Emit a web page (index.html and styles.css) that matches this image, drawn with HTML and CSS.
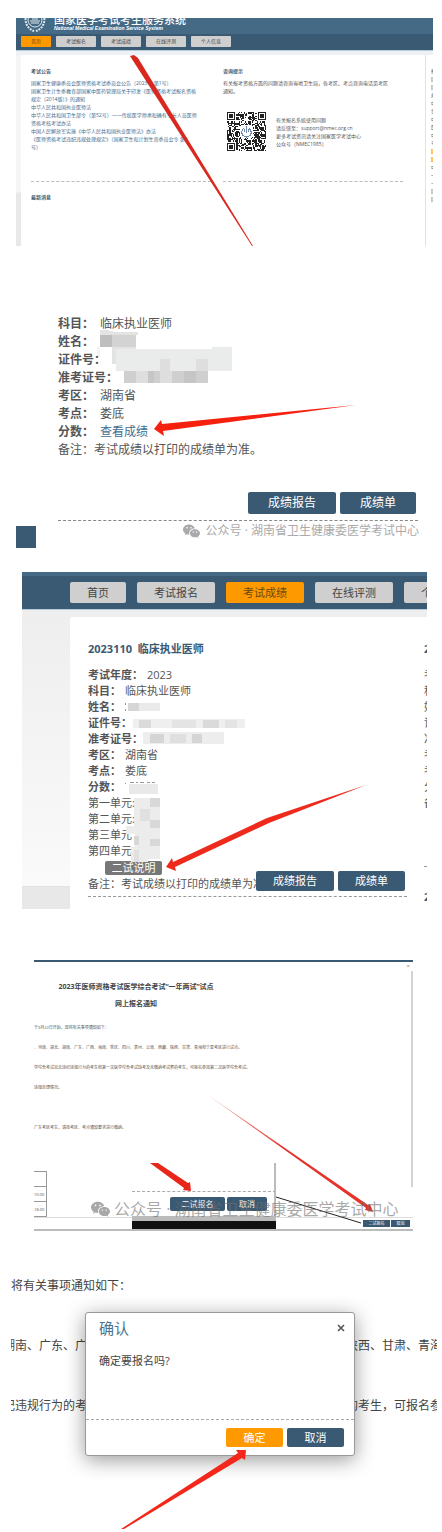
FILE: index.html
```html
<!DOCTYPE html>
<html lang="zh-CN">
<head>
  <meta charset="UTF-8">
  <title>国家医学考试考生服务系统</title>
  <meta name="viewport" content="width=device-width, initial-scale=1.0">
  <link rel="stylesheet" href="styles.css">
</head>

<body>
  <svg class="defs" width="0" height="0">
    <symbol id="wechat" viewBox="0 0 34 28">
      <path fill="currentColor" d="M12 1C5.400 1 0 5.500 0 11c0 3.200 1.800 6 4.600 7.900L3.500 22.500l4.200-2.200c1.400.4 2.800.7 4.300.7h.8a8 8 0 0 1-.4-2.500C12.400 13 17.300 9 23.400 9h.5C22.800 4.400 17.900 1 12 1z"/>
      <path fill="currentColor" d="M34 18.500c0-4.600-4.600-8.200-10.200-8.200s-10 3.600-10 8.200 4.400 8.200 10 8.200c1.300 0 2.500-.2 3.700-.6l3.300 1.800-.9-3c2.500-1.500 4.100-3.800 4.100-6.400z"/>
      <g fill="#fff"><circle cx="8" cy="7.500" r="1.600"/><circle cx="16" cy="7.500" r="1.600"/><circle cx="20.500" cy="16" r="1.300"/><circle cx="27.200" cy="16" r="1.300"/></g>
    </symbol>
  </svg>

  <!-- home page -->
  <section class="shot home">
    <header class="banner">
      <svg class="emblem" viewBox="0 0 22 16" fill="none" stroke="#dfe9f0">
        <circle cx="11" cy="2" r="7"/>
        <path d="M1.500 0c0 7 3 11 8.500 13M20.500 0c0 7-3 11-8.500 13" stroke-width="2" stroke-dasharray="2 1"/>
        <path d="M6 3h10M7 5h8M8 1h6"/>
      </svg>
      <div class="brand">
        <h1>国家医学考试考生服务系统</h1>
        <p>National Medical Examination Service System</p>
      </div>
    </header>
    <nav class="tabs small">
      <a href="#" class="active">首页</a>
      <a href="#">考试报名</a>
      <a href="#">考试成绩</a>
      <a href="#">在线评测</a>
      <a href="#">个人信息</a>
    </nav>
    <div class="home-body">
      <main class="home-card">
        <div class="home-cols">
          <div class="col">
            <h2>考试公告</h2>
            <ul class="notices">
              <li><a href="#">国家卫生健康委员会医师资格考试委员会公告（2023年 第1号）</a></li>
              <li><a href="#">国家卫生计生委教育部国家中医药管理局关于印发《医师资格考试报名资格<br>规定（2014版）》的通知</a></li>
              <li><a href="#">中华人民共和国执业医师法</a></li>
              <li><a href="#">中华人民共和国卫生部令（第52号）——传统医学师承和确有专长人员医师<br>资格考核考试办法</a></li>
              <li><a href="#">中国人民解放军实施《中华人民共和国执业医师法》办法</a></li>
              <li><a href="#">《医师资格考试违纪违规处理规定》（国家卫生和计划生育委员会令 第4<br>号）</a></li>
            </ul>
          </div>
          <div class="col">
            <h2>咨询提示</h2>
            <p>有关报考资格方面的问题请咨询当地卫生局，各考区、考点咨询电话见考区<br>通知。</p>
            <div class="contact">
              <svg id="qr" class="qr" viewBox="0 0 33 33" shape-rendering="crispEdges"></svg>
              <p>有关报名系统使用问题<br>请反馈至：support@nmec.org.cn<br>更多考试资讯请关注国家医学考试中心<br>公众号（NMEC1985）</p>
            </div>
          </div>
        </div>
        <h2 class="latest">最新消息</h2>
      </main>
      <aside class="home-side">报<br>国<br>国<br>规<br>中<br>资<br>中<br>医<br>中<br>号<br><b>国</b><br><b>国</b><br>中<br>一<br>一<br>国<br>国</aside>
    </div>
    <svg class="overlay" viewBox="0 0 417 228">
      <path fill="#d9281f" d="M114 38l4-1 4 3 115 188h-1z"/>
    </svg>
  </section>

  <!-- score query -->
  <section class="score">
    <dl class="fields">
      <div><dt>科目：</dt><dd>临床执业医师</dd></div>
      <div><dt>姓名：</dt><dd></dd></div>
      <div><dt>证件号：</dt><dd></dd></div>
      <div><dt>准考证号：</dt><dd></dd></div>
      <div><dt>考区：</dt><dd>湖南省</dd></div>
      <div><dt>考点：</dt><dd>娄底</dd></div>
      <div><dt>分数：</dt><dd><a href="#">查看成绩</a></dd></div>
      <div>备注：考试成绩以打印的成绩单为准。</div>
    </dl>
    <div class="actions">
      <button class="wide">成绩报告</button>
      <button>成绩单</button>
    </div>
    <div class="score-foot">
      <span class="corner"></span>
      <p class="watermark"><svg><use href="#wechat"/></svg>公众号 · 湖南省卫生健康委医学考试中心</p>
    </div>
    <svg class="overlay" viewBox="0 0 442 233">
      <g shape-rendering="crispEdges">
        <path fill="#e3e3e3" d="M100 15h7l8 2h23v3h-38zM112 32h24v17h-24z"/>
        <path fill="#bebebe" d="M100 20h12v12h-12z"/><path fill="#d3d3d3" d="M112 20h24v12h-24z"/>
        <path fill="#eaebeb" d="M116 34h96v-2h20v24H116z"/>
        <path fill="#dedede" d="M160 44h10v12h-10zM196 44h12v12h-12z"/><path fill="#f3f3f3" d="M97 32h3v9h-3z"/>
        <path fill="#cfcfcf" d="M124 56h84v12h-84z"/><path fill="#dedede" d="M136 56h12v12h-12zM160 56h12v12h-12z"/><path fill="#c6c6c6" d="M148 56h6v12h-6zM184 56h12v12h-12z"/>
      </g>
      <path fill="#f6200f" d="M154 114l7-9 1 4 194-19-193 26 1 5z"/>
    </svg>
  </section>

  <!-- score detail -->
  <section class="shot detail">
    <nav class="tabs">
      <a href="#">首页</a>
      <a href="#">考试报名</a>
      <a href="#" class="active">考试成绩</a>
      <a href="#">在线评测</a>
      <a href="#">个人信息</a>
    </nav>
    <div class="detail-body">
      <div class="detail-card">
        <div class="record">
          <h2>2023110&nbsp; 临床执业医师</h2>
          <dl class="fields compact">
            <div><dt>考试年度：</dt><dd>2023</dd></div>
            <div><dt>科目：</dt><dd>临床执业医师</dd></div>
            <div><dt>姓名：</dt><dd></dd></div>
            <div><dt>证件号：</dt><dd></dd></div>
            <div><dt>准考证号：</dt><dd></dd></div>
            <div><dt>考区：</dt><dd>湖南省</dd></div>
            <div><dt>考点：</dt><dd>娄底</dd></div>
            <div><dt>分数：</dt><dd></dd></div>
            <div>第一单元:</div>
            <div>第二单元:</div>
            <div>第三单元</div>
            <div>第四单元</div>
          </dl>
          <button class="explain">二试说明</button>
          <p class="remark">备注：考试成绩以打印的成绩单为准</p>
          <div class="actions floating">
            <button class="wide">成绩报告</button>
            <button>成绩单</button>
          </div>
        </div>
        <div class="next-record">
          <h2>2022</h2>
          <p>考<br>科<br>姓<br>证<br>准<br>考<br>考<br>分<br>备</p>
          <hr>
          <h2>2021</h2>
        </div>
      </div>
    </div>
    <svg class="overlay" viewBox="0 0 405 337">
      <g shape-rendering="crispEdges">
        <path fill="#d6d6d6" d="M106 131h11v8h-11z"/><path fill="#eaeaea" d="M117 131h21v8h-21z"/><path fill="#999" d="M103 131h1v2h-1zM103 137h1v2h-1z"/>
        <path fill="#efefef" d="M111 147h112v9H111z"/><path fill="#dadada" d="M117 148h12v8h-12zM181 148h16v8h-16z"/><path fill="#e4e4e4" d="M150 148h24v8h-24zM203 148h12v8h-12z"/>
        <path fill="#ededed" d="M121 160h81v12h-81z"/><path fill="#d5d5d5" d="M128 162h14v9h-14zM170 162h10v9h-10z"/><path fill="#dfdfdf" d="M148 162h16v9h-16z"/>
        <path fill="#e9e9e9" d="M107 212h29v10h-29z"/><path fill="#999" d="M103 211h1v1h-1zM108 210h4v1h-4zM114 210h2v1h-2zM118 210h4v1h-4zM125 210h3v1h-3zM130 210h3v1h-3z"/>
        <path fill="#ececec" d="M112 226h26v61h-12v3h-17v-15h4v-13h-9v-8h8z"/>
        <path fill="#d8d8d8" d="M128 226h10v9h-10zM128 248h10v8h-10zM112 264h5v9h-5zM128 267h10v7h-10z"/>
        <path fill="#e0e0e0" d="M118 237h10v12h-10zM112 278h5v12h-5z"/>
      </g>
      <path fill="#ee2a1c" d="M144 295l6-9 1 4 94-44 99-33-97 38-94 44 1 4z"/>
    </svg>
  </section>

  <!-- second exam notice -->
  <section class="shot notice">
    <button class="tiny-close" aria-label="关闭">×</button>
    <h2>2023年医师资格考试医学综合考试“一年两试”试点<br>网上报名通知</h2>
    <div class="notice-text">
      <p>于9月22日开始，现将有关事项通知如下：</p>
      <p>、河南、湖北、湖南、广东、广西、海南、重庆、四川、贵州、云南、西藏、陕西、甘肃、青海和宁夏考区进行试点。</p>
      <p>学综合考试且无违纪违规行为的考生和第一次医学综合考试缺考及未缴纳考试费的考生，可报名参加第二次医学综合考试。</p>
      <p>违规处理情况。</p>
      <p class="spaced">广东考区考生，请按考区、考点通知要求进行缴纳。</p>
    </div>
    <table class="stub">
      <tr><td></td></tr>
      <tr><td>10:00</td></tr>
      <tr><td>18:00</td></tr>
    </table>
    <div class="notice-foot">
      <button class="wide">二试报名</button>
      <button>取消</button>
    </div>
    <span class="scrollbar"></span>
    <div class="inset">
      <div class="inset-top"></div>
      <div class="inset-actions">
        <button class="wide">二试报名</button>
        <button>取消</button>
      </div>
    </div>
    <svg class="overlay" viewBox="0 0 379 271">
      <path fill="#e8261a" d="M116 203h8l30 20 2-1 1 9-8-1 1-2z"/>
      <path stroke="#222" d="M242 237l85 26"/>
      <linearGradient id="fade" x1="171" y1="133" x2="250" y2="186" gradientUnits="userSpaceOnUse">
        <stop offset="0" stop-color="#f7c4c0"/><stop offset="1" stop-color="#e5332a"/>
      </linearGradient>
      <path fill="url(#fade)" d="M171 133l163 112 2-1 3 8-8-2 1-2z"/>
    </svg>
    <p class="watermark large"><svg><use href="#wechat"/></svg>公众号 · 湖南省卫生健康委医学考试中心</p>
  </section>

  <!-- confirm dialog -->
  <section class="shot confirm">
    <p>将有关事项通知如下：</p>
    <p class="cut"><span>湖南、广东、广西</span><span>陕西、甘肃、青海</span></p>
    <p class="cut"><span>纪违规行为的考生</span><span>的考生，可报名参加</span></p>
    <div class="dialog" role="dialog" aria-labelledby="dialogTitle">
      <div class="dialog-head">
        <h2 id="dialogTitle">确认</h2>
        <button class="close" aria-label="关闭">
          <svg viewBox="0 0 8 8"><path d="M1 1l6 6M7 1L1 7" stroke="#555" stroke-width="1.600"/></svg>
        </button>
      </div>
      <p>确定要报名吗?</p>
      <div class="dialog-foot">
        <button class="ok">确定</button>
        <button>取消</button>
      </div>
    </div>
    <svg class="overlay" viewBox="0 0 426 274">
      <path fill="#f3271a" d="M110 273l117-76-2-3 10 0-1 10-3-2-118 71z"/>
    </svg>
  </section>

  <script>
    // QR code: three finder squares, the rest filled from a fixed seed
    const qr = document.getElementById('qr');
    const size = 33;
    let seed = 1985;
    let d = '';

    function finder(x, y) {
      const fx = x > size - 9 ? x - (size - 7) : x;
      const fy = y > size - 9 ? y - (size - 7) : y;
      if (x > 7 && x < size - 8 || y > 7 && y < size - 8) return null;
      if (x > 7 && y > 7) return null;
      if (fx < 0 || fy < 0 || fx > 6 || fy > 6) return false;
      const r = Math.max(Math.abs(fx - 3), Math.abs(fy - 3));
      return r !== 2;
    }

    for (let y = 0; y < size; y++) {
      for (let x = 0; x < size; x++) {
        seed = (seed * 16807) % 2147483647;
        const f = finder(x, y);
        const on = f === null ? seed % 100 < 54 : f;
        if (on) d += `M${x} ${y}h1v1h-1z`;
      }
    }
    qr.innerHTML = `<path d="${d}" fill="#222"/>
      <rect x="11" y="11" width="11" height="11" rx="2" fill="#fff"/>
      <path d="M14 14a4 4 0 1 0 5 0M16.500 12v6M15 14v3M18 14v3" fill="none" stroke="#7289ad"/>`;
  </script>
</body>
</html>
```
FILE: styles.css
```css
:root {
  --blue: #3a5a73;
  --blue-light: #456a86;
  --orange: #ff9900;
  --text: #555;
  --tab: #cfcfcf;
}
* {
  box-sizing: border-box;
}
body {
  margin: 0;
  background: #fff;
  color: var(--text);
  font-family: "Open Sans", "Noto Sans CJK SC", sans-serif;
  font-size: 12px;
}
h1, h2, p, ul, dl, dd {
  margin: 0;
  padding: 0;
}
ul { list-style: none; }
a {
  color: #3f6d90;
  text-decoration: none;
}
button {
  margin: 0;
  padding: 0;
  border: none;
  border-radius: 2px;
  background: var(--blue);
  color: #fff;
  font-family: inherit;
  cursor: pointer;
}
.defs { display: block; }
.shot {
  position: relative;
  overflow: hidden;
  white-space: nowrap;
}
.overlay {
  position: absolute;
  left: 0; top: 0;
  width: 100%;
  pointer-events: none;
}

/* nav tabs */
.tabs {
  display: flex;
  gap: 11px;
  padding: 6px 0 6px 48px;
  background: var(--blue);
  border-top: 4px solid var(--blue-light);
  border-bottom: 1px solid #b9cbd9;
}
.tabs a {
  flex: none;
  padding: 0 17px;
  border-radius: 2px;
  background: var(--tab);
  color: #444;
  font-size: 11px;
  line-height: 21px;
}
.tabs a.active {
  background: var(--orange);
  color: #6b4a10;
}
.tabs.small {
  gap: 5px;
  padding: 2px 5px 3px;
  border-top: none;
}
.tabs.small a {
  padding: 0 10px;
  border-radius: 1px;
  font-size: 5px;
  line-height: 11px;
}

/* home */
.home {
  margin: 18px 9px 0 16px;
  font-size: 5px;
  line-height: 8px;
}
.banner {
  display: flex;
  gap: 8px;
  height: 16px;
  padding-left: 8px;
  overflow: hidden;
  background: var(--blue-light);
  color: #fff;
}
.emblem {
  width: 22px;
  height: 16px;
}
.brand {
  display: flex;
  flex-direction: column;
  justify-content: flex-end;
  padding-bottom: 3px;
}
.brand h1 {
  font-size: 11px;
  font-weight: 500;
  line-height: 10px;
}
.brand p {
  font-family: "Liberation Sans", sans-serif;
  font-size: 5px;
  font-style: italic;
  font-weight: bold;
  line-height: 6px;
}
.home-body {
  display: flex;
  padding: 4px 0 0 5px;
  background: linear-gradient(#edf1f5 4px, #f6f6f6 5px, #f6f6f6 141px, #e8e8e8 142px);
}
.home-card {
  flex: 1;
  min-width: 0;
  padding: 12px 22px 45px 10px;
  background: #fff;
}
.home-cols {
  display: grid;
  grid-template-columns: 1fr 1fr;
  gap: 12px;
}
.col {
  min-width: 0;
  padding-bottom: 30px;
  border-bottom: 1px dashed #bbb;
}
.home h2 {
  margin-bottom: 4px;
  color: var(--blue);
  font-size: 5px;
}
.home h2.latest { margin: 11px 0 0; }
.contact {
  display: flex;
  align-items: center;
  gap: 10px;
  margin-top: 17px;
  padding-left: 4px;
}
.qr {
  width: 39px;
  height: 39px;
}
.home-side {
  width: 8px;
  height: 191px;
  padding: 12px 0 0 5px;
  overflow: hidden;
  background: #fff;
  border-left: 1px solid #e2e2e2;
}
.home-side b { color: var(--orange); }

/* score */
.score {
  position: relative;
  margin-top: 69px;
}
.fields {
  padding-left: 58px;
  line-height: 18px;
}
.fields > div {
  display: flex;
  gap: 6px;
}
.fields dt { font-weight: bold; }
.fields.compact {
  padding: 0;
  font-size: 11px;
  line-height: 16px;
}
.fields.compact > div { gap: 4px; }
.actions {
  display: flex;
  justify-content: flex-end;
  gap: 4px;
  margin: 33px 24px 0 58px;
  padding: 0 2px 6px 0;
  border-bottom: 1px dashed #888;
}
.actions button {
  width: 76px;
  font-size: 12px;
  line-height: 22px;
}
.actions button.wide { width: 88px; }
.score-foot {
  display: flex;
  justify-content: space-between;
  align-items: flex-start;
  padding: 0 23px 0 16px;
}
.corner {
  width: 20px;
  height: 22px;
  margin-top: 5px;
  background: var(--blue);
}
.watermark {
  display: flex;
  align-items: center;
  gap: 6px;
  color: #aaa;
  font-size: 12px;
  line-height: 20px;
}
.watermark svg {
  width: 17px;
  height: 14px;
}

/* detail */
.detail { margin: 24px 15px 0 22px; }
.detail-body {
  padding: 7px 0 0 48px;
  background: linear-gradient(#eee, #fafafa 276px, #ddd 276px, #e8e8e8 277px);
}
.detail-card {
  display: grid;
  grid-template-columns: 1fr 3px;
  align-items: start;
  gap: 17px;
  height: 292px;
  padding: 24px 0 0 18px;
  background: #fff;
  border-top-left-radius: 3px;
}
.record {
  position: relative;
  border-bottom: 1px dashed #999;
}
.detail h2 {
  margin-bottom: 10px;
  color: var(--blue);
  font-size: 11px;
  line-height: 16px;
}
.explain {
  display: block;
  width: 57px;
  margin: 2px 0 1px 17px;
  background: #777;
  font-size: 11px;
  line-height: 14px;
}
.remark {
  padding-bottom: 4px;
  font-size: 11px;
  line-height: 16px;
}
.actions.floating {
  position: absolute;
  right: 2px;
  bottom: 5px;
  margin: 0;
  padding: 0;
  border: none;
}
.floating button {
  width: 67px;
  font-size: 11px;
  line-height: 20px;
}
.floating button.wide { width: 78px; }
.next-record {
  overflow: hidden;
  font-size: 11px;
  line-height: 16px;
}
.next-record hr {
  margin: 55px 0 22px;
  border: none;
  border-top: 1px dashed #999;
}

/* notice */
.notice {
  margin: 51px 29px 0 34px;
  padding-top: 16px;
  border-top: 2px solid var(--blue);
  border-bottom: 2px solid #bbb;
}
.notice h2 {
  width: 160px;
  margin-left: 22px;
  color: #444;
  font-size: 7px;
  line-height: 17px;
  text-align: center;
}
.notice-text {
  margin-top: 6px;
  font-size: 4px;
  line-height: 20px;
}
.notice-text .spaced { margin-top: 20px; }
.tiny-close {
  position: absolute;
  right: 3px;
  top: 0;
  background: none;
  color: #777;
  font-size: 6px;
  line-height: 8px;
}
.scrollbar {
  position: absolute;
  right: 0;
  top: 9px;
  width: 2px;
  height: 216px;
  background: #d3d3d3;
}
.stub {
  width: 13px;
  margin-top: 33px;
  border-collapse: collapse;
  font-size: 4px;
}
.stub td {
  height: 15px;
  padding: 0;
  border: 1px solid #999;
  border-left: none;
}
.notice-foot {
  display: flex;
  justify-content: flex-end;
  gap: 1px;
  padding: 2px 3px;
  border-top: 1px solid #ddd;
}
.notice-foot button {
  width: 19px;
  border-radius: 0;
  font-size: 4px;
  line-height: 7px;
}
.notice-foot button.wide { width: 27px; }
.inset {
  position: absolute;
  left: 98px;
  bottom: 0;
  width: 144px;
  border-bottom: 8px solid #111;
  background: #fff;
}
.inset-top {
  height: 29px;
  border-right: 2px solid #bbb;
  border-bottom: 1px dashed #aaa;
}
.inset-actions {
  display: flex;
  justify-content: flex-end;
  gap: 2px;
  padding: 5px 7px;
  border-right: 2px solid #bbb;
  border-bottom: 5px solid #bbb;
}
.inset-actions button {
  width: 40px;
  font-size: 8px;
  line-height: 14px;
}
.inset-actions button.wide { width: 55px; }
.notice .overlay { top: -2px; }
.watermark.large {
  position: absolute;
  left: 57px;
  bottom: 8px;
  gap: 4px;
  color: rgba(110, 110, 110, .6);
  font-size: 16px;
  line-height: 24px;
}
.watermark.large svg {
  width: 19px;
  height: 16px;
}

/* confirm */
.confirm {
  margin: 25px 5px 0 11px;
  padding-bottom: 94px;
  color: #444;
  line-height: 60px;
}
.cut {
  display: grid;
  grid-template-columns: 343px 1fr;
  margin-left: -8px;
}
.dialog {
  position: absolute;
  left: 74px;
  top: 56px;
  width: 270px;
  background: #fff;
  border: 1px solid #999;
  border-radius: 3px;
  box-shadow: 0 4px 20px rgba(0,0,0,.4);
  line-height: 18px;
}
.dialog-head {
  display: flex;
  justify-content: space-between;
  align-items: center;
  padding: 3px 9px 0 13px;
}
.dialog h2 {
  color: #4a7391;
  font-size: 15px;
  font-weight: normal;
  line-height: 24px;
}
.close {
  width: 8px;
  height: 8px;
  background: none;
}
.close svg { display: block; }
.dialog p {
  padding: 12px 13px 49px;
  font-size: 11px;
}
.dialog-foot {
  display: flex;
  justify-content: flex-end;
  gap: 4px;
  padding: 8px 10px;
  border-top: 1px dashed #aaa;
}
.dialog-foot button {
  width: 57px;
  font-size: 11px;
  line-height: 19px;
}
.dialog-foot .ok { background: var(--orange); }
```
